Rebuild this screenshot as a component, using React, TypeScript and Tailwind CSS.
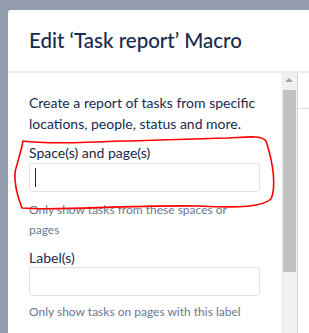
export default function App() {
  return (
    <div className="relative w-[309px] h-[333px] overflow-hidden bg-[#939cad] pt-[10px] pl-[8px] font-['Lato',sans-serif]">
      <div className="flex h-full flex-col rounded-tl-[3px] bg-white">
        {/* Header */}
        <div className="flex h-[63px] items-center border-b-2 border-[#ebecf0] pl-[21px]">
          <h1 className="text-[20.5px] font-medium text-[#172b4d] whitespace-nowrap">
            Edit ‘Task report’ Macro
          </h1>
        </div>

        {/* Body */}
        <div className="flex flex-1">
          <div className="w-[273px] pl-[21px] pr-[21px] pt-[19px] text-[14px] text-[#172b4d]">
            <p className="leading-[21px]">
              Create a report of tasks from specific locations, people, status and more.
            </p>

            <label className="mt-[9px] block leading-[20px]">Space(s) and page(s)</label>
            <div className="flex h-[29px] w-[231px] items-center rounded-[3px] border border-[#dfe1e6] pl-[5px]">
              <span className="h-[19px] w-px bg-[#172b4d]" />
            </div>
            <p className="mt-[8px] text-[12px] leading-[20px] text-[#6b778c]">
              Only show tasks from these spaces or
              <br />
              pages
            </p>

            <label className="mt-[8px] block leading-[19px]">Label(s)</label>
            <div className="h-[29px] w-[231px] rounded-[3px] border border-[#dfe1e6]" />
            <p className="mt-[6px] text-[12px] leading-[20px] text-[#6b778c] whitespace-nowrap">
              Only show tasks on pages with this label
            </p>
          </div>

          {/* Scrollbar */}
          <div className="flex w-[16px] flex-col items-center bg-[#f0f0f0]">
            <div className="mt-[5px] h-0 w-0 border-x-[4px] border-b-[4px] border-x-transparent border-b-[#a3a3a3]" />
            <div className="mt-[8px] h-[182px] w-[13px] bg-[#c1c1c1]" />
          </div>

          {/* Right pane */}
          <div className="flex-1 border-l border-[#d6d6d6]">
            <div className="mt-[35px] border-b border-[#dcdcdc]" />
          </div>
        </div>
      </div>

      {/* Red hand-drawn annotation */}
      <svg className="absolute left-0 top-0" width="309" height="333" viewBox="0 0 309 333" fill="none">
        <path
          d="M23 141 C 21 152, 18 160, 15 172 C 14 186, 18 198, 22 208 C 60 211, 120 205, 200 206 C 240 208, 262 207, 271 199 C 276 188, 274 165, 266 141 C 262 135, 248 137, 228 138 C 180 139, 145 141, 120 141 C 80 143, 45 144, 23 141"
          stroke="#ff0000"
          strokeWidth="1.6"
          strokeLinecap="round"
        />
      </svg>
    </div>
  )
}
